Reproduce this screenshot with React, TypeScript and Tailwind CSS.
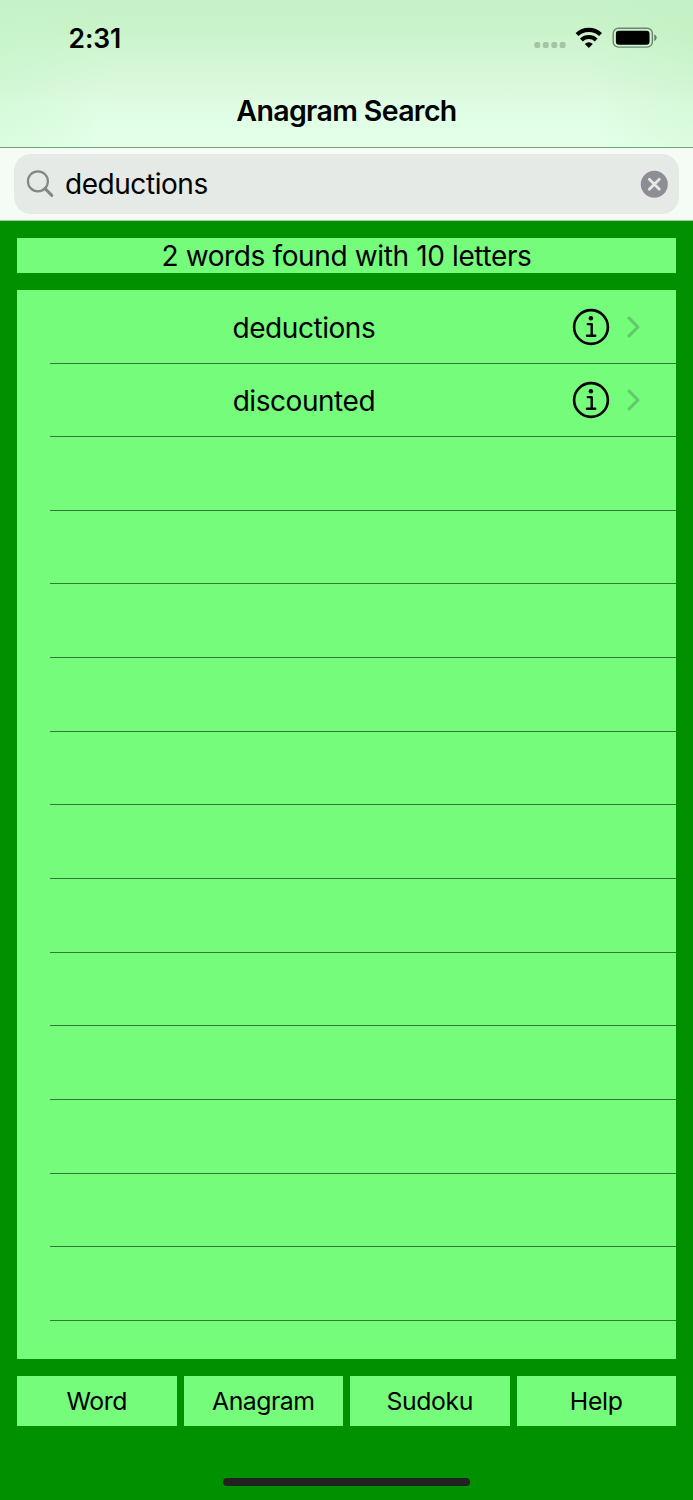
const words = ["deductions", "discounted"];
const emptyRows = Array.from({ length: 12 }, (_, i) => i);
const tabs = [
  { label: "Word", spacing: "tracking-[-0.4px]" },
  { label: "Anagram", spacing: "tracking-[-0.5px]" },
  { label: "Sudoku", spacing: "tracking-[-0.4px]" },
  { label: "Help", spacing: "tracking-[-0.3px]" },
];

function StatusIcons() {
  return (
    <svg width="124" height="22" viewBox="0 0 124 22" fill="none">
      <g fill="#000" fillOpacity="0.2">
        <rect x="0.3" y="15" width="6" height="6" rx="2" />
        <rect x="8.8" y="15" width="6" height="6" rx="2" />
        <rect x="17.3" y="15" width="6" height="6" rx="2" />
        <rect x="25.6" y="15" width="6" height="6" rx="2" />
      </g>
      <g stroke="#000" strokeWidth="4.1">
        <path d="M43 7.5a17.4 17.4 0 0 1 23.6 0" />
        <path d="M47.4 12.9a10.8 10.8 0 0 1 14.8 0" />
      </g>
      <path d="M50.8 16.9a5.8 5.8 0 0 1 8 0L54.8 21Z" fill="#000" />
      <rect x="79.2" y="1.2" width="39.2" height="18.9" rx="5.2" stroke="#000" strokeOpacity="0.45" strokeWidth="1.4" />
      <rect x="81.9" y="3.8" width="33.6" height="13.9" rx="3" fill="#000" />
      <path d="M120.3 7.6c1.5.5 2.3 1.6 2.3 3.2s-.8 2.7-2.3 3.2Z" fill="#000" fillOpacity="0.48" />
    </svg>
  );
}

function SearchIcon() {
  return (
    <svg width="28" height="28" viewBox="0 0 28 28" fill="none" stroke="#858786">
      <circle cx="11.9" cy="11.3" r="10" strokeWidth="2.2" />
      <path d="m19 18.6 6.8 6.8" strokeWidth="3" strokeLinecap="round" />
    </svg>
  );
}

function ClearIcon() {
  return (
    <svg width="28" height="28" viewBox="0 0 28 28">
      <circle cx="14.3" cy="14.3" r="13.5" fill="#8e8d94" />
      <path d="m9.3 9.3 10 10m0-10-10 10" stroke="#e5eae6" strokeWidth="2.7" strokeLinecap="round" />
    </svg>
  );
}

function InfoIcon() {
  return (
    <svg width="38" height="38" viewBox="0 0 38 38" fill="none" stroke="#000">
      <circle cx="19" cy="19" r="16.9" strokeWidth="2.6" />
      <circle cx="18.9" cy="10.2" r="2.2" fill="#000" stroke="none" />
      <path d="M15.8 16.1h3.9v11.7M15 27.8h8.2" strokeWidth="2.4" strokeLinecap="round" strokeLinejoin="round" />
    </svg>
  );
}

function Chevron() {
  return (
    <svg width="14" height="22" viewBox="0 0 14 22" fill="none">
      <path d="m2.1 2.2 8.8 8.8-8.8 8.8" stroke="#62c96c" strokeWidth="3.1" strokeLinecap="round" strokeLinejoin="round" />
    </svg>
  );
}

export default function App() {
  return (
    <div className="flex h-[1500px] w-[693px] flex-col overflow-hidden bg-[#009000] font-[Inter,sans-serif] text-black">
      <header className="flex h-[148px] flex-col border-b border-[#75a178] bg-[radial-gradient(ellipse_110px_170px_at_0%_40%,rgba(194,246,199,0.45),transparent),radial-gradient(ellipse_110px_170px_at_100%_30%,rgba(190,240,190,0.4),transparent),linear-gradient(#c6f2c8_0%,#caf3ca_20%,#d3f7d5_42%,#dcf8dd_60%,#dffde4_72%,#e3ffe8_100%)]">
        <div className="flex h-[76px] items-center justify-between pr-[35px] pl-[68.5px]">
          <span className="text-[26.5px] leading-none font-semibold tracking-[-0.1px]">2:31</span>
          <StatusIcons />
        </div>
        <h1 className="flex h-[71px] items-center justify-center text-[28.5px] leading-none font-semibold tracking-[-0.65px]">
          Anagram Search
        </h1>
      </header>

      <div className="h-[73px] border-b border-[#a1cfa3] bg-[#f5fcf6] px-[14px] pt-[6px]">
        <div className="flex h-[60px] items-center rounded-[17px] bg-[#e5eae6] pr-[11px] pl-[12px]">
          <SearchIcon />
          <span className="ml-[11px] flex-1 text-[28px] leading-none tracking-[-0.45px]">deductions</span>
          <ClearIcon />
        </div>
      </div>

      <main className="flex flex-col px-[17px] pt-[17px]">
        <div className="flex h-[35px] items-center justify-center bg-[#75fc7a] pt-px text-[28px] leading-none tracking-[-0.37px]">
          2 words found with 10 letters
        </div>

        <ul className="mt-[16.85px] h-[1069.15px] overflow-hidden bg-[#75fc7a] pl-[33.4px]">
          {words.map((word) => (
            <li key={word} className="flex h-[73.67px] items-center border-b border-[#337837] pt-[1px] pr-[34px]">
              <span className="w-[507px] shrink-0 pt-[2px] text-center text-[28px] leading-none tracking-[-0.45px]">{word}</span>
              <span className="ml-[14.6px] shrink-0">
                <InfoIcon />
              </span>
              <span className="ml-[17px] shrink-0">
                <Chevron />
              </span>
            </li>
          ))}
          {emptyRows.map((row) => (
            <li key={row} className="h-[73.67px] border-b border-[#337837]" />
          ))}
        </ul>

        <nav className="mt-[17px] grid h-[50px] grid-cols-4 gap-[7px]">
          {tabs.map(({ label, spacing }) => (
            <button key={label} className={`bg-[#75fc7a] pt-px text-[24.8px] leading-none ${spacing}`}>
              {label}
            </button>
          ))}
        </nav>
      </main>

      <div className="mt-[52px] h-[8px] w-[247px] self-center rounded-full bg-[#222]" />
    </div>
  );
}
